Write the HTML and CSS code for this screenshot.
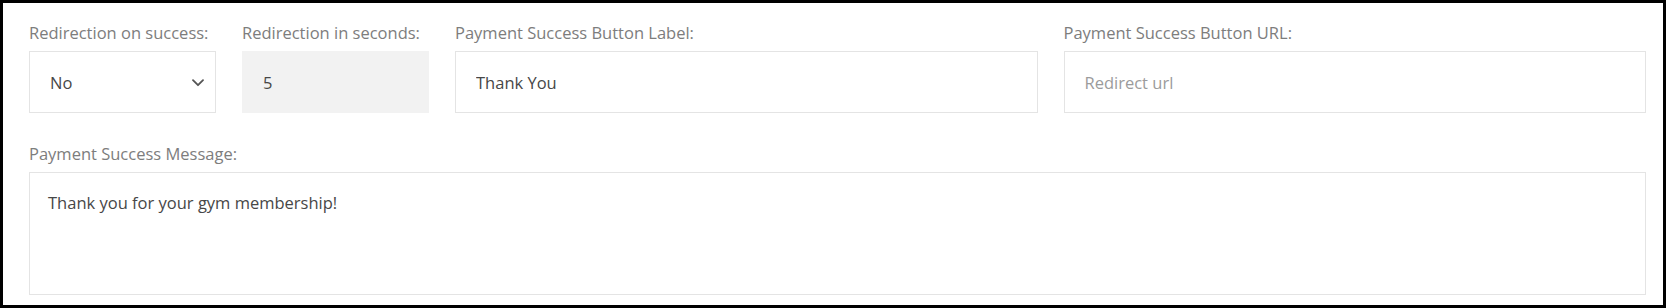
FILE: index.html
```html
<!DOCTYPE html>
<html lang="en">
<head>
<meta charset="utf-8">
<title>Payment success settings</title>
<link rel="stylesheet" href="styles.css">
</head>
<body>
<div class="frame">
  <div class="row-top">
    <div class="field">
      <label class="label" for="redir">Redirection on success:</label>
      <div class="select-wrap">
        <select id="redir" class="control select">
          <option>No</option>
          <option>Yes</option>
        </select>
        <svg class="chevron" width="12" height="8" viewBox="0 0 12 8" aria-hidden="true">
          <path d="M1 1.2 L6 6.2 L11 1.2" fill="none" stroke="#555" stroke-width="1.8" stroke-linecap="round" stroke-linejoin="round"/>
        </svg>
      </div>
    </div>
    <div class="field">
      <label class="label" for="secs">Redirection in seconds:</label>
      <input id="secs" class="control disabled" type="text" value="5" readonly>
    </div>
    <div class="field">
      <label class="label" for="btnlabel">Payment Success Button Label:</label>
      <input id="btnlabel" class="control" type="text" value="Thank You">
    </div>
    <div class="field">
      <label class="label" for="btnurl">Payment Success Button URL:</label>
      <input id="btnurl" class="control" type="text" placeholder="Redirect url">
    </div>
  </div>
  <div class="field field-message">
    <label class="label" for="msg">Payment Success Message:</label>
    <textarea id="msg" class="control textarea">Thank you for your gym membership!</textarea>
  </div>
</div>
</body>
</html>
```
FILE: styles.css
```css
* { box-sizing: border-box; }
html, body { margin: 0; padding: 0; background: #fff; }
body { font-family: "Open Sans", "Noto Sans", "Liberation Sans", sans-serif; }

.frame {
  width: 1666px;
  height: 308px;
  border: 3px solid #000;
  padding: 20px 17px 0 26px;
  background: #fff;
}

.row-top {
  display: grid;
  grid-template-columns: 187px 187px 1fr 1fr;
  column-gap: 26px;
}

.field { display: flex; flex-direction: column; }
.field-message { margin-top: 31px; }

.label {
  font-size: 16.5px;
  line-height: 20px;
  color: #7d7d7d;
  margin-bottom: 8px;
  white-space: nowrap;
}

.control {
  display: block;
  width: 100%;
  height: 62px;
  margin: 0;
  border: 1px solid #e4e4e4;
  border-radius: 0;
  background: #fff;
  font-family: inherit;
  font-size: 16.5px;
  color: #474747;
  padding: 0 20px;
  outline: none;
}
.control::placeholder { color: #9b9b9b; }

.disabled { background: #f2f2f2; border-color: #f2f2f2; }

.select-wrap { position: relative; }
.select {
  -webkit-appearance: none;
  appearance: none;
  padding-right: 40px;
}
.chevron {
  position: absolute;
  right: 12px;
  top: 28px;
  pointer-events: none;
}

.textarea {
  height: 123px;
  padding: 19px 18px;
  resize: none;
  line-height: 22px;
}
```
